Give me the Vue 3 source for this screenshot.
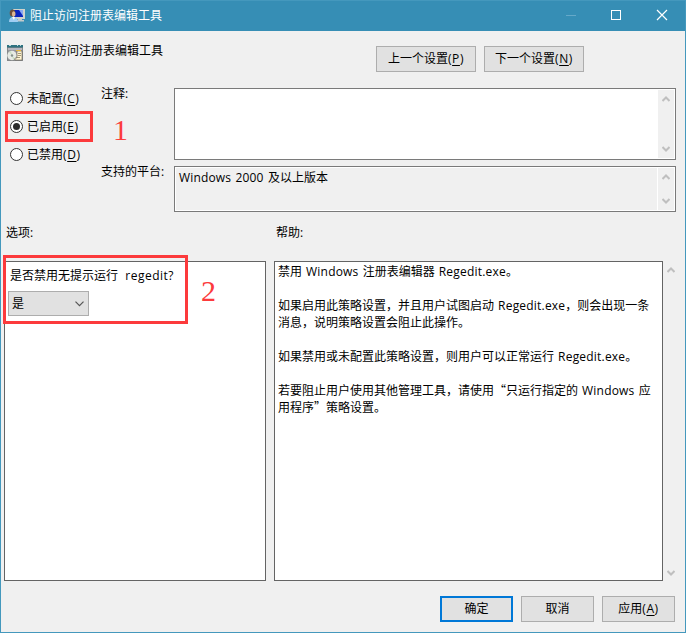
<script setup>
import { ref } from 'vue'

const title = '阻止访问注册表编辑工具'
const state = ref('E')
const states = [
  { key: 'C', label: '未配置' },
  { key: 'E', label: '已启用' },
  { key: 'D', label: '已禁用' }
]
const help = [
  ['禁用 ', 'Windows', ' 注册表编辑器 ', 'Regedit.exe', '。'],
  [],
  ['如果启用此策略设置，并且用户试图启动 ', 'Regedit.exe', '，则会出现一条'],
  ['消息，说明策略设置会阻止此操作。'],
  [],
  ['如果禁用或未配置此策略设置，则用户可以正常运行 ', 'Regedit.exe', '。'],
  [],
  ['若要阻止用户使用其他管理工具，请使用“只运行指定的 ', 'Windows', ' 应'],
  ['用程序”策略设置。']
]
</script>

<template>
  <div class="window" lang="zh-CN">
    <header class="titlebar">
      <svg class="app-icon" width="16" height="16" viewBox="0 0 16 16">
        <path d="M4 1h12v10H4z" fill="#d0d3cb" />
        <path d="M5 2h9v7H5z" fill="#0a24bd" />
        <path d="M10 2h4v6z" fill="#8aa8f2" />
        <path d="M9 11h4v1h2v1.500H8V12h1z" fill="#c3cacc" />
        <ellipse cx="3.500" cy="5" rx="2.800" ry="3.500" fill="#70503a" />
        <ellipse cx="4.700" cy="6" rx="1.800" ry="2.800" fill="#dfb891" />
        <path d="M0 14q0-5 4.500-5 4.500 0 4.500 5z" fill="#9fcdf2" />
        <path d="M3 9l2 3 1-3z" fill="#fff" />
      </svg>
      <span class="title">{{ title }}</span>
      <svg class="controls" width="138" height="30" viewBox="0 0 138 30">
        <path d="M19 14.500h10" stroke="#65a9c9" />
        <rect x="64.500" y="9.500" width="9" height="9" fill="none" stroke="#fff" />
        <path d="M110 9l10 10M120 9l-10 10" stroke="#fff" stroke-width="1.200" />
      </svg>
    </header>

    <section class="heading">
      <svg class="policy-icon" width="16" height="16" viewBox="0 0 16 16">
        <path d="M0 0h16v16H0z" fill="#85888a" />
        <path d="M0 0h16v2.500H0z" fill="#2e7180" />
        <path d="M2 0h2v1H2zM10 0h1v1h-1zM13 0h1v1h-1z" fill="#b9d9dd" />
        <path d="M1 3h14v2H1z" fill="#b8b6c0" />
        <path d="M1 5h14v10H1z" fill="#96969c" />
        <circle cx="5" cy="10.500" r="4.700" fill="#e7eae4" />
        <path d="M5 10.500L2 7l2-1zM5 10.500l3 3-2 1z" fill="#c9dfc2" />
        <circle cx="5" cy="10.500" r="1.200" fill="#85908a" />
        <path d="M10 6h5v9H8v-2h2z" fill="#fff4d2" stroke="#6b6654" stroke-width=".6" />
        <path d="M11 8.500h3M10.500 10.500h3.500M10 12.500h3" stroke="#8c8264" stroke-width=".8" />
        <path d="M9 5h5v1H9z" fill="#e6b93c" />
      </svg>
      <span class="policy-name">{{ title }}</span>
      <div class="nav">
        <button class="btn wide">上一个设置<span class="key">(<u>P</u>)</span></button>
        <button class="btn wide">下一个设置<span class="key">(<u>N</u>)</span></button>
      </div>
    </section>

    <section class="settings">
      <div class="radios">
        <div v-for="s in states" :key="s.key" class="radio" @click="state = s.key">
          <svg width="13" height="13" viewBox="0 0 13 13">
            <circle cx="6.500" cy="6.500" r="6" fill="#fff" stroke="#333" />
            <circle v-if="state === s.key" cx="6.500" cy="6.500" r="3.500" fill="#2b2b2b" />
          </svg>
          <span>{{ s.label }}<span class="key">(<u>{{ s.key }}</u>)</span></span>
        </div>
        <div class="mark mark-one"></div>
        <div class="digit digit-one">1</div>
      </div>
      <div class="labels">
        <span>注释:</span>
        <span>支持的平台:</span>
      </div>
      <div class="fields">
        <div class="field comment">
          <div class="content"></div>
          <div class="scroll">
            <svg width="8" height="6" viewBox="0 0 8 6"><path d="M.5 5L4 1.500 7.500 5" /></svg>
            <svg width="8" height="6" viewBox="0 0 8 6"><path d="M.5 1L4 4.500 7.500 1" /></svg>
          </div>
        </div>
        <div class="field platform">
          <div class="content"><span class="latin">Windows 2000</span> 及以上版本</div>
          <div class="scroll">
            <svg width="8" height="6" viewBox="0 0 8 6"><path d="M.5 5L4 1.500 7.500 5" /></svg>
            <svg width="8" height="6" viewBox="0 0 8 6"><path d="M.5 1L4 4.500 7.500 1" /></svg>
          </div>
        </div>
      </div>
    </section>

    <section class="captions">
      <span>选项:</span>
      <span>帮助:</span>
    </section>

    <section class="panels">
      <div class="panel options">
        <div class="question">是否禁用无提示运行&nbsp; <span class="regedit">regedit?</span></div>
        <div class="select">
          <span>是</span>
          <svg width="9" height="6" viewBox="0 0 9 6"><path d="M.5 .7L4.500 4.700 8.500 .7" /></svg>
        </div>
        <div class="mark mark-two"></div>
        <div class="digit digit-two">2</div>
      </div>
      <div class="panel help">
        <div v-for="(line, i) in help" :key="i" class="line">
          <span v-for="(part, j) in line" :key="j" :class="j % 2 ? 'name' : 'han'">{{ part }}</span>
        </div>
      </div>
      <div class="scroll outer">
        <svg width="8" height="6" viewBox="0 0 8 6"><path d="M.5 5L4 1.500 7.500 5" /></svg>
        <svg width="8" height="6" viewBox="0 0 8 6"><path d="M.5 1L4 4.500 7.500 1" /></svg>
      </div>
    </section>

    <footer class="footer">
      <button class="btn primary">确定</button>
      <button class="btn">取消</button>
      <button class="btn">应用<span class="key">(<u>A</u>)</span></button>
    </footer>
  </div>
</template>

<style>
body { margin: 0; }
</style>

<style scoped>
* { box-sizing: border-box; }
.window {
  width: 686px;
  height: 633px;
  display: flex;
  flex-direction: column;
  background: #f0f0f0;
  border: 1px solid #4498bd;
  font: 12px/17px "Open Sans", "Noto Sans CJK SC", sans-serif;
  color: #000;
  white-space: nowrap;
}
svg { display: block; flex: none; }
u { text-decoration: underline; text-underline-offset: 2px; text-decoration-thickness: 1px; }
.key { letter-spacing: .6px; }
.titlebar {
  height: 30px;
  flex: none;
  display: flex;
  align-items: center;
  padding-left: 8px;
  background: #368eb5;
  color: #fff;
}
.title { margin: -1px 0 0 5px; }
.controls { margin-left: auto; }
.heading { height: 57px; flex: none; display: flex; align-items: flex-start; padding: 14px 0 0 6px; }
.policy-name { margin: -3px 0 0 8px; width: 345px; }
.nav { display: flex; gap: 8px; margin-top: 1px; }
.btn {
  width: 73px;
  height: 26px;
  padding: 0 0 2px;
  border: 1px solid #adadad;
  background: #e1e1e1;
  font: inherit;
  color: #000;
}
.btn.wide { width: 100px; }
.btn.primary { border: 2px solid #0078d7; }
.settings { display: flex; height: 124px; flex: none; }
.radios { position: relative; width: 100px; padding: 2px 0 0 9px; }
.radio { height: 17px; margin-bottom: 11px; display: flex; align-items: center; gap: 4px; }
.labels { width: 73px; display: flex; flex-direction: column; gap: 61px; margin-top: -3px; }
.fields { display: flex; flex-direction: column; gap: 6px; width: 502px; }
.field { display: flex; border: 1px solid #7a7a7a; background: #fff; padding: 1px; }
.comment { height: 72px; }
.platform { height: 46px; }
.content { flex: 1; padding: 1px 3px; word-spacing: 1.200px; }
.latin { letter-spacing: .15px; }
.platform .content { background: #f0f0f0; margin-right: 1px; }
.scroll {
  width: 16px;
  display: flex;
  flex-direction: column;
  align-items: center;
  justify-content: space-between;
  padding: 6px 0;
  background: #f0f0f0;
}
.scroll path { fill: none; stroke: #bfbfbf; stroke-width: 2; }
.captions { display: flex; height: 49px; flex: none; padding: 12px 0 0 5px; }
.captions span { width: 270px; }
.panels { display: flex; height: 320px; flex: none; padding-left: 3px; }
.panel { border: 1px solid #646464; background: #fff; }
.options { position: relative; width: 262px; margin-right: 8px; padding: 5px 0 0 5px; }
.regedit { letter-spacing: .5px; margin-left: 1px; }
.select {
  display: flex;
  align-items: center;
  justify-content: space-between;
  width: 81px;
  height: 25px;
  margin: 7px 0 0 -2px;
  padding: 0 4px 0 3px;
  border: 1px solid #adadad;
  background: #e1e1e1;
}
.select path { fill: none; stroke: #555; stroke-width: 1.2; }
.help { width: 389px; padding: 0 3px; }
.line { height: 17px; white-space: pre; }
.han { font-family: "Noto Sans CJK SC", sans-serif; word-spacing: 1.400px; }
.name { letter-spacing: .2px; }
.outer { padding: 6px 0 5px; }
.footer { display: flex; justify-content: flex-end; gap: 8px; padding: 15px 10px 0 0; }
.mark { position: absolute; border: 3px solid #fc3a3c; pointer-events: none; }
.mark-one { left: 4px; top: 23px; width: 88px; height: 31px; }
.mark-two { left: -2px; top: -7px; width: 185px; height: 69px; }
.digit { position: absolute; color: #fc3a3c; font: 30px/30px "Liberation Serif", serif; }
.digit-one { left: 112px; top: 27px; }
.digit-two { left: 196px; top: 14px; }
</style>
